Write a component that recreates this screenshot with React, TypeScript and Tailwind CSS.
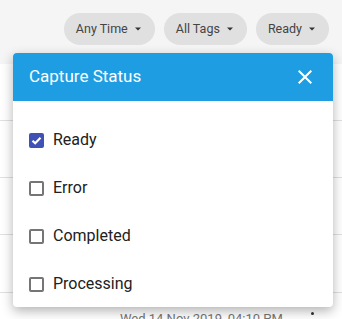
import { useState } from "react";

const statuses = ["Ready", "Error", "Completed", "Processing"];
const filters = ["Any Time", "All Tags", "Ready"];

const Caret = () => (
  <svg width="6" height="4" viewBox="0 0 6 4" className="ml-[7px]">
    <path d="M0 0.5 L6 0.5 L3 3.5 Z" fill="#333" />
  </svg>
);

const App = () => {
  const [checked, setChecked] = useState<string[]>(["Ready"]);

  const toggle = (name: string) => {
    setChecked((prev) => (prev.includes(name) ? prev.filter((n) => n !== name) : [...prev, name]));
  };

  return (
    <div className="relative w-[342px] h-[319px] overflow-hidden bg-white font-['Roboto',sans-serif]">
      {/* filter bar */}
      <div className="h-[64px] bg-[#f5f5f5] flex justify-end items-start gap-[9px] pt-[13px] pr-[13px]">
        {filters.map((f) => (
          <button
            key={f}
            className="h-[32px] rounded-full bg-[#e0e0e0] pl-[12px] pr-[14px] flex items-center text-[12.5px] font-normal text-[#444]"
          >
            {f}
            <Caret />
          </button>
        ))}
      </div>

      {/* list behind the popup */}
      <div className="flex flex-col">
        <div className="h-[57px] border-b border-[#e0e0e0]" />
        <div className="h-[57px] border-b border-[#e0e0e0]" />
        <div className="h-[57px] border-b border-[#e0e0e0]" />
        <div className="h-[58px] border-b border-[#e0e0e0]" />
        <div className="relative h-[40px]">
          <div className="absolute left-[120px] top-[19px] text-[13px] text-[#757575] leading-none">
            Wed 14 Nov 2019, 04:10 PM
          </div>
          <div className="absolute left-[311px] top-[19px] w-[3px] h-[3px] rounded-full bg-[#333]" />
        </div>
      </div>

      {/* status popup */}
      <div className="absolute left-[13px] top-[53px] w-[320px] h-[254px] bg-white rounded-[4px] shadow-[0_4px_12px_rgba(0,0,0,0.3)] overflow-hidden">
        <div className="h-[48px] bg-[#1e9de2] flex items-center justify-between pl-[16px] pr-[16px]">
          <span className="text-white text-[17px]">Capture Status</span>
          <svg width="24" height="24" viewBox="0 0 24 24">
            <path
              d="M19 6.41 17.59 5 12 10.59 6.41 5 5 6.41 10.59 12 5 17.59 6.41 19 12 13.41 17.59 19 19 17.59 13.41 12z"
              fill="#fff"
            />
          </svg>
        </div>
        <div className="pt-[15px] flex flex-col">
          {statuses.map((s) => {
            const on = checked.includes(s);
            return (
              <label key={s} className="h-[48px] flex items-center pl-[16px] cursor-pointer" onClick={() => toggle(s)}>
                {on ? (
                  <span className="w-[15px] h-[15px] rounded-[2px] bg-[#3f51b5] flex items-center justify-center">
                    <svg width="13" height="13" viewBox="0 0 12 12">
                      <path d="M2.3 6.2 L4.8 8.6 L9.7 3.5" stroke="#fff" strokeWidth="2" fill="none" />
                    </svg>
                  </span>
                ) : (
                  <span className="w-[15px] h-[15px] rounded-[2px] border-2 border-[#757575]" />
                )}
                <span className="ml-[9px] text-[16px] text-[#212121]">{s}</span>
              </label>
            );
          })}
        </div>
      </div>
    </div>
  );
};

export default App;
